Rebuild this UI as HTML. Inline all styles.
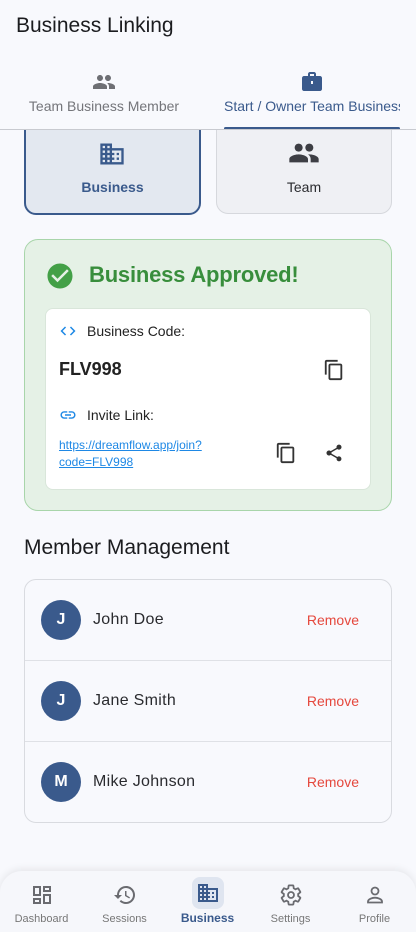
<!DOCTYPE html>
<html><head><meta charset="utf-8"><style>
*{box-sizing:border-box;margin:0;padding:0}
body{width:416px;height:932px;overflow:hidden;background:#f8f9fd;font-family:"Liberation Sans",Roboto,sans-serif;position:relative;color:#1b1c1f}
.abs{position:absolute}
svg{display:block}
.title{left:16px;top:14px;font-size:21px;font-weight:500;color:#1b1c1f}
.tab{top:70px;text-align:center;font-size:14px}
.card{border-radius:12px}
.row{position:absolute;left:0;right:0;height:81px;border-bottom:1px solid #dfe1e6}
.av{position:absolute;left:16px;top:20px;width:40px;height:40px;border-radius:50%;background:#3a5a8c;color:#fff;font-weight:700;font-size:16px;text-align:center;line-height:40px}
.nm{position:absolute;left:68px;top:31px;font-size:16px;letter-spacing:.3px;color:#2a2b2f}
.rm{position:absolute;right:32px;top:32px;font-size:14px;color:#e5483d}
.nav{position:absolute;left:0;top:871px;width:416px;height:61px;background:#f6f7fb;border-radius:22px 22px 0 0;box-shadow:0 -2px 8px rgba(0,0,0,.08)}
.ni{position:absolute;top:0;width:83px;text-align:center;font-size:11px;color:#777}
.ni svg{margin:12px auto 0}
.ni div{margin-top:6px}
</style></head><body>
<div class="abs title">Business Linking</div>

<div class="abs tab" style="left:0;width:208px">
<svg width="24" height="24" viewBox="0 0 24 24" style="margin:0 auto" fill="#6e6f74"><path d="M16 11c1.66 0 2.99-1.34 2.99-3S17.66 5 16 5c-1.66 0-3 1.34-3 3s1.34 3 3 3zm-8 0c1.66 0 2.99-1.34 2.99-3S9.66 5 8 5C6.34 5 5 6.34 5 8s1.34 3 3 3zm0 2c-2.33 0-7 1.17-7 3.5V19h14v-2.5c0-2.33-4.67-3.5-7-3.5zm8 0c-.29 0-.62.02-.97.05 1.16.84 1.97 1.97 1.97 3.45V19h6v-2.5c0-2.33-4.67-3.5-7-3.5z"/></svg>
<div style="margin-top:4px;color:#74757a">Team Business Member</div></div>
<div class="abs tab" style="left:208px;width:208px">
<svg width="24" height="24" viewBox="0 0 24 24" style="margin:0 auto" fill="#3a5a8c"><path d="M20 6h-4V4c0-1.11-.89-2-2-2h-4c-1.11 0-2 .89-2 2v2H4c-1.11 0-1.99.89-1.99 2L2 19c0 1.11.89 2 2 2h16c1.11 0 2-.89 2-2V8c0-1.11-.89-2-2-2zm-6 0h-4V4h4v2z"/><rect x="11" y="11" width="2" height="3" fill="#f8f9fd"/></svg>
<div style="margin-top:4px;margin-left:16px;width:176px;overflow:hidden;white-space:nowrap;color:#3a5a8c;text-align:left">Start / Owner Team Business</div></div>
<div class="abs" style="left:224px;top:127px;width:176px;height:3px;background:#3a5a8c;border-radius:2px"></div>
<div class="abs" style="left:0;top:129px;width:416px;height:1px;background:#c8cad0"></div>

<div class="abs" style="left:0;top:130px;width:416px;height:100px;overflow:hidden">
<div class="abs card" style="left:24px;top:-20px;width:177px;height:105px;background:#e3e8f0;border:2px solid #3a5a8c">
<svg width="28" height="28" viewBox="0 0 24 24" fill="#3a5a8c" style="position:absolute;left:72px;top:28px"><path d="M12 7V3H2v18h20V7H12zM6 19H4v-2h2v2zm0-4H4v-2h2v2zm0-4H4V9h2v2zm0-4H4V5h2v2zm4 12H8v-2h2v2zm0-4H8v-2h2v2zm0-4H8V9h2v2zm0-4H8V5h2v2zm10 12h-8v-2h2v-2h-2v-2h2v-2h-2V9h8v10zm-2-8h-2v2h2v-2zm0 4h-2v2h2v-2z"/></svg>
<div style="position:absolute;left:0;right:0;top:67px;text-align:center;font-size:14px;font-weight:700;color:#3a5a8c">Business</div></div>
<div class="abs card" style="left:216px;top:-20px;width:176px;height:104px;background:#eff0f4;border:1px solid #d6d8dd">
<svg width="32" height="32" viewBox="0 0 24 24" fill="#3d3e44" style="position:absolute;left:71px;top:26px"><path d="M16 11c1.66 0 2.99-1.34 2.99-3S17.66 5 16 5c-1.66 0-3 1.34-3 3s1.34 3 3 3zm-8 0c1.66 0 2.99-1.34 2.99-3S9.66 5 8 5C6.34 5 5 6.34 5 8s1.34 3 3 3zm0 2c-2.33 0-7 1.17-7 3.5V19h14v-2.5c0-2.33-4.67-3.5-7-3.5zm8 0c-.29 0-.62.02-.97.05 1.16.84 1.970 1.97 1.97 3.45V19h6v-2.5c0-2.33-4.670-3.5-7-3.5z"/></svg>
<div style="position:absolute;left:0;right:0;top:68px;text-align:center;font-size:14px;font-weight:500;color:#2a2b2f">Team</div></div>
</div>

<div class="abs card" style="left:24px;top:239px;width:368px;height:272px;background:#e5f1e6;border:1px solid #a8d5aa;border-radius:14px">
<svg width="30" height="30" viewBox="0 0 24 24" fill="#43a047" style="position:absolute;left:20px;top:21px"><path d="M12 2C6.48 2 2 6.48 2 12s4.48 10 10 10 10-4.48 10-10S17.52 2 12 2zm-2 15l-5-5 1.41-1.41L10 14.17l7.59-7.59L19 8l-9 9z"/></svg>
<div style="position:absolute;left:64px;top:22px;font-size:22px;font-weight:700;color:#388e3c;letter-spacing:-0.2px">Business Approved!</div>
<div style="position:absolute;left:20px;top:68px;width:326px;height:182px;background:#fff;border:1px solid #d9e6da;border-radius:8px">
<svg width="18" height="18" viewBox="0 0 24 24" fill="#1e88e5" style="position:absolute;left:13px;top:13px"><path d="M9.4 16.6L4.8 12l4.6-4.6L8 6l-6 6 6 6 1.4-1.4zm5.2 0l4.6-4.6-4.6-4.6L16 6l6 6-6 6-1.4-1.4z"/></svg>
<div style="position:absolute;left:41px;top:14px;font-size:14px;color:#222">Business Code:</div>
<div style="position:absolute;left:13px;top:50px;font-size:18px;font-weight:700;color:#222">FLV998</div>
<svg width="22" height="22" viewBox="0 0 24 24" fill="#333" style="position:absolute;left:277px;top:50px"><path d="M16 1H4c-1.1 0-2 .9-2 2v14h2V3h12V1zm3 4H8c-1.1 0-2 .9-2 2v14c0 1.1.9 2 2 2h11c1.1 0 2-.9 2-2V7c0-1.1-.9-2-2-2zm0 16H8V7h11v14z"/></svg>
<svg width="18" height="18" viewBox="0 0 24 24" fill="#1e88e5" style="position:absolute;left:13px;top:97px"><path d="M3.9 12c0-1.71 1.39-3.1 3.1-3.1h4V7H7c-2.76 0-5 2.24-5 5s2.24 5 5 5h4v-1.9H7c-1.71 0-3.1-1.39-3.1-3.1zM8 13h8v-2H8v2zm9-6h-4v1.9h4c1.71 0 3.1 1.39 3.1 3.1s-1.39 3.1-3.1 3.1h-4V17h4c2.76 0 5-2.24 5-5s-2.24-5-5-5z"/></svg>
<div style="position:absolute;left:41px;top:98px;font-size:14px;color:#222">Invite Link:</div>
<div style="position:absolute;left:13px;top:128px;font-size:12px;line-height:17px;color:#1e88e5;text-decoration:underline">https://dreamflow.app/join?<br>code=FLV998</div>
<svg width="22" height="22" viewBox="0 0 24 24" fill="#333" style="position:absolute;left:229px;top:133px"><path d="M16 1H4c-1.1 0-2 .9-2 2v14h2V3h12V1zm3 4H8c-1.1 0-2 .9-2 2v14c0 1.1.9 2 2 2h11c1.1 0 2-.9 2-2V7c0-1.1-.9-2-2-2zm0 16H8V7h11v14z"/></svg>
<svg width="20" height="20" viewBox="0 0 24 24" fill="#333" style="position:absolute;left:278px;top:134px"><path d="M18 16.08c-.76 0-1.44.3-1.96.77L8.91 12.7c.05-.23.09-.46.09-.7s-.04-.47-.09-.7l7.05-4.11c.54.5 1.25.81 2.04.81 1.66 0 3-1.34 3-3s-1.34-3-3-3-3 1.34-3 3c0 .24.04.47.09.7L8.04 9.81C7.5 9.31 6.79 9 6 9c-1.66 0-3 1.34-3 3s1.34 3 3 3c.79 0 1.5-.31 2.04-.81l7.12 4.16c-.05.21-.08.43-.08.65 0 1.61 1.31 2.92 2.92 2.92 1.61 0 2.92-1.31 2.92-2.92s-1.31-2.92-2.92-2.92z"/></svg>
</div></div>

<div class="abs" style="left:24px;top:536px;font-size:21px;font-weight:500;color:#1b1c1f">Member Management</div>
<div class="abs" style="left:24px;top:579px;width:368px;height:244px;border:1px solid #d9dbe0;border-radius:12px;overflow:hidden;background:#f8f9fd">
<div class="row" style="top:0"><div class="av">J</div><div class="nm">John Doe</div><div class="rm">Remove</div></div>
<div class="row" style="top:81px"><div class="av">J</div><div class="nm">Jane Smith</div><div class="rm">Remove</div></div>
<div class="row" style="top:162px;border:none"><div class="av">M</div><div class="nm">Mike Johnson</div><div class="rm">Remove</div></div>
</div>

<div class="nav">
<div class="ni" style="left:0"><svg width="24" height="24" viewBox="0 0 24 24" fill="#6a6b70"><path d="M19 5v2h-4V5h4M9 5v6H5V5h4m10 8v6h-4v-6h4M9 17v2H5v-2h4M21 3h-8v6h8V3zM11 3H3v10h8V3zm10 8h-8v10h8V11zm-10 4H3v6h8v-6z"/></svg><div>Dashboard</div></div>
<div class="ni" style="left:83px"><svg width="24" height="24" viewBox="0 0 24 24" fill="#6a6b70"><path d="M13 3c-4.97 0-9 4.03-9 9H1l3.89 3.89.07.14L9 12H6c0-3.87 3.13-7 7-7s7 3.13 7 7-3.13 7-7 7c-1.93 0-3.68-.79-4.94-2.06l-1.42 1.42C8.27 19.99 10.51 21 13 21c4.97 0 9-4.03 9-9s-4.03-9-9-9zm-1 5v5l4.28 2.54.72-1.21-3.5-2.08V8H12z"/></svg><div>Sessions</div></div>
<div class="ni" style="left:166px"><div style="width:32px;height:32px;margin:6px auto 0;background:#dfe5f0;border-radius:8px;padding-top:4px"><svg width="24" height="24" viewBox="0 0 24 24" fill="#3a5a8c" style="margin:0 auto"><path d="M12 7V3H2v18h20V7H12zM6 19H4v-2h2v2zm0-4H4v-2h2v2zm0-4H4V9h2v2zm0-4H4V5h2v2zm4 12H8v-2h2v2zm0-4H8v-2h2v2zm0-4H8V9h2v2zm0-4H8V5h2v2zm10 12h-8v-2h2v-2h-2v-2h2v-2h-2V9h8v10zm-2-8h-2v2h2v-2zm0 4h-2v2h2v-2z"/></svg></div><div style="margin-top:2px;font-size:12px;font-weight:700;color:#3a5a8c">Business</div></div>
<div class="ni" style="left:249px"><svg width="24" height="24" viewBox="0 0 24 24" fill="none" stroke="#6a6b70" stroke-width="1.8"><path d="M19.14 12.94c.04-.3.06-.61.06-.94 0-.32-.02-.64-.07-.94l2.03-1.58a.49.49 0 0 0 .12-.61l-1.92-3.32a.49.49 0 0 0-.59-.22l-2.39.96c-.5-.38-1.03-.7-1.62-.94l-.36-2.54a.48.48 0 0 0-.48-.41h-3.84c-.24 0-.43.17-.47.41l-.36 2.54c-.59.24-1.13.57-1.620.94l-2.39-.96c-.22-.08-.47 0-.59.22L2.74 8.87c-.12.21-.08.47.12.61l2.03 1.58c-.05.3-.09.63-.09.94s.02.64.07.94l-2.03 1.58a.49.49 0 0 0-.12.61l1.92 3.32c.12.22.37.29.59.22l2.39-.96c.5.38 1.03.7 1.62.94l.36 2.54c.05.24.24.41.48.41h3.84c.24 0 .44-.17.47-.41l.36-2.54c.59-.24 1.13-.56 1.62-.94l2.39.96c.22.08.47 0 .59-.22l1.92-3.32c.12-.22.07-.47-.12-.61l-2.01-1.58z"/><circle cx="12" cy="12" r="3"/></svg><div>Settings</div></div>
<div class="ni" style="left:333px"><svg width="24" height="24" viewBox="0 0 24 24" fill="none" stroke="#6a6b70" stroke-width="1.8"><circle cx="12" cy="8" r="3.5"/><path d="M5 19.5v-1c0-2.5 4.5-3.8 7-3.8s7 1.3 7 3.8v1z"/></svg><div>Profile</div></div>
</div>
</body></html>
